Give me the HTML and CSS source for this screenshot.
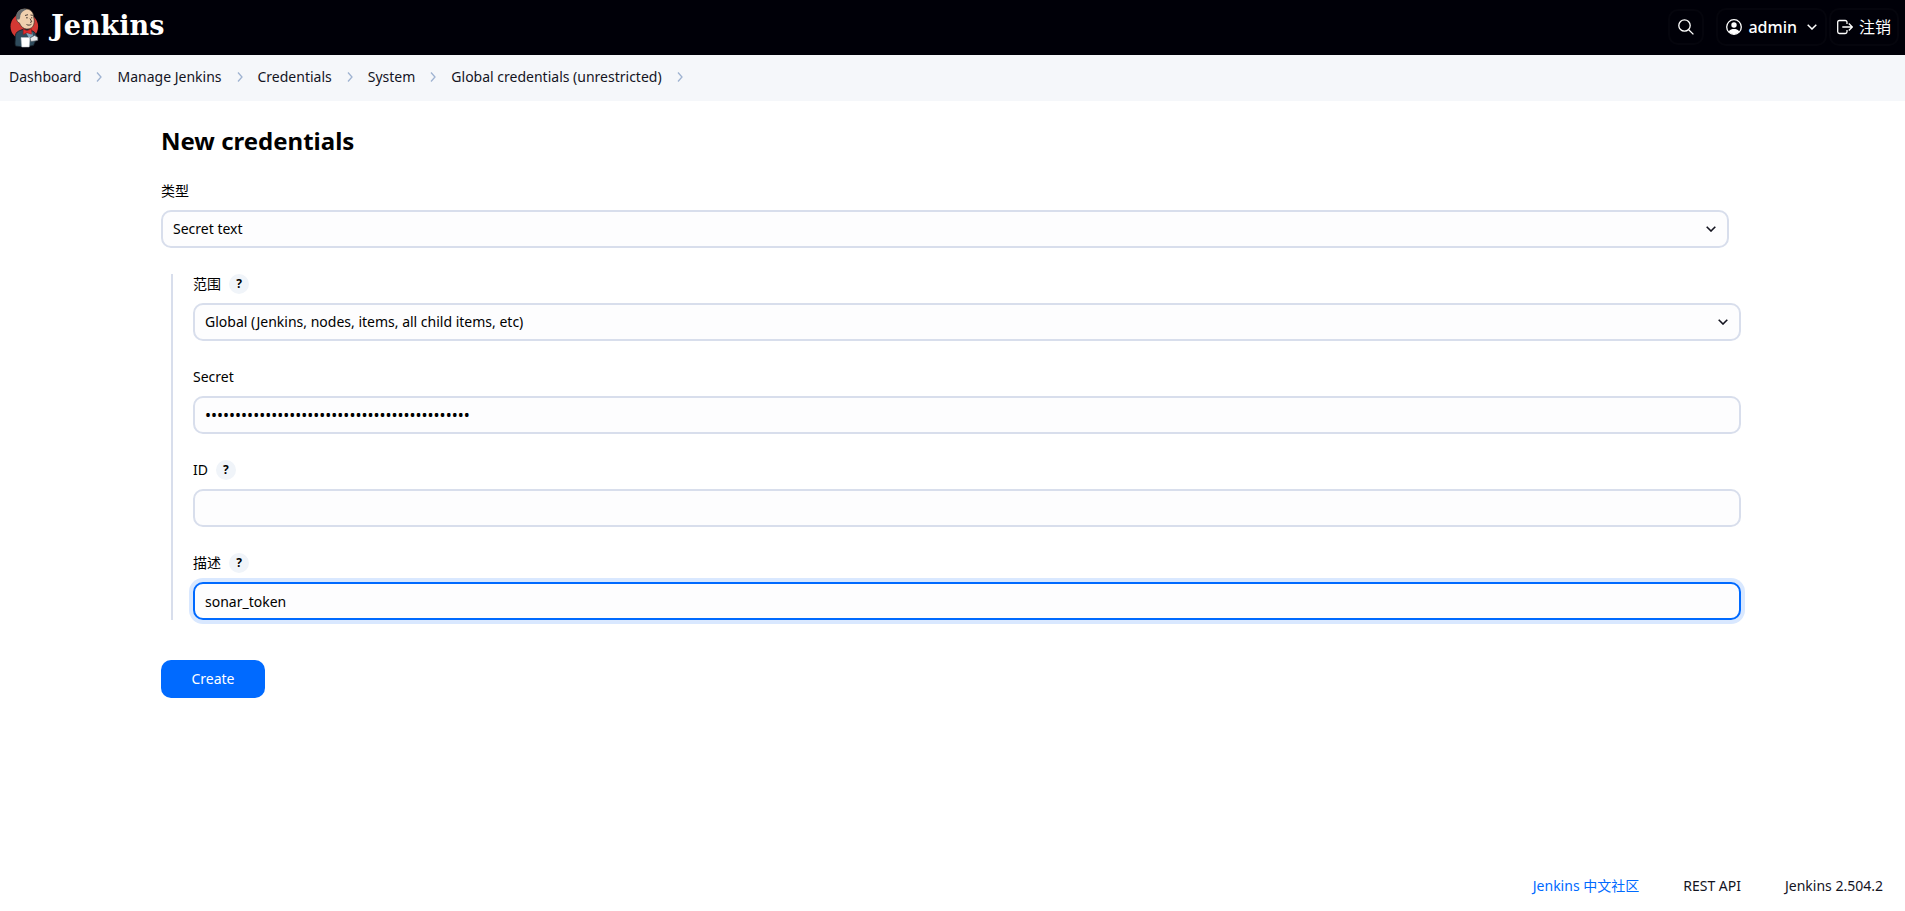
FILE: index.html
```html
<!DOCTYPE html>
<html lang="zh-CN">
<head>
<meta charset="utf-8">
<meta name="viewport" content="width=device-width, initial-scale=1">
<title>New credentials [Jenkins]</title>
<link rel="stylesheet" href="styles.css">
</head>
<body>
<header class="header">
  <a class="brand" href="#">
    <svg class="brand-logo" viewBox="0 0 29 40" aria-hidden="true">
      <ellipse cx="14.300" cy="18.500" rx="13.800" ry="13.500" fill="#d33833"/>
      <path d="M5.500 38C4.500 35 5.500 33 5.300 29c-.2-2.500 1-5 3.500-6l5-2 7 1 3.500 2c2 2 2.700 5 2.200 7l-3 6.500-10 1.500z" fill="#2f4b5c" stroke="#141d26" stroke-width=".8"/>
      <path d="M6.500 10C6 4 10 .8 15 .8c5.500 0 8.500 3.200 8.700 8.200.2 2 .8 3 .5 5.500-.4 3.500-2 5.500-5 6.300-3.500.8-6.500-.5-8.200-3-.8-1.300-1.200-2-1.700-3-1.800-.3-2.800-2.500-2.800-4.800z" fill="#f0d0ae" stroke="#3b302b" stroke-width=".7"/>
      <path d="M6.700 11.500C5.500 7 7 3 11 1.400c2.200-1 4.500-1 6 0C14 2 11 4 10.300 7.500c0 1.800-.3 3-1 4z" fill="#676b6e"/>
      <path d="M15 7.500l3-.8M20.500 7l2.300.4M16 9.800h1.800M21 9.800h1.300M20 10.500l1.800 3.300-1.800.6M16.500 16.500c1.800 1 3.500.8 5-.3" fill="none" stroke="#3b302b" stroke-width=".9"/>
      <path d="M16 25l6-1 1 4-4 2z" fill="#82a6bd"/>
      <path d="M13.200 21l3.800 1.800 4.500-2v5.400L17 24.700l-3.800 1.800z" fill="#e02c2e" stroke="#8b1815" stroke-width=".5"/>
      <path d="M11 29.500h9l-.8 9.500h-7.400z" fill="#fff" stroke="#b8bec4" stroke-width=".5"/>
      <path d="M20 30l4.500-2.500 3.300 1.800v3.200l-6.800 1z" fill="#e7e9eb" stroke="#50565c" stroke-width=".6"/>
    </svg>
    <span class="brand-name">Jenkins</span>
  </a>
  <nav class="header-actions" aria-label="Account">
    <button class="header-button header-search" type="button" aria-label="Search">
      <svg class="icon" viewBox="0 0 16 16"><circle cx="6.500" cy="6.500" r="5.700"/><path d="M10.700 10.700l4.700 4.700"/></svg>
    </button>
    <button class="header-button header-user" type="button">
      <svg class="icon" viewBox="0 0 16 16"><circle cx="8" cy="8" r="7.300"/><circle cx="8" cy="6" r="2.700" fill="currentColor" stroke="none"/><path d="M2.700 12.600C4 10.400 6 10 8 10s4 .4 5.300 2.600A7 7 0 0 1 8 15.200a7 7 0 0 1-5.300-2.600z" fill="currentColor" stroke="none"/></svg>
      <span>admin</span>
      <svg class="header-chevron" viewBox="0 0 10 6"><path d="M.7.7L5 5 9.300.7"/></svg>
    </button>
    <a class="header-button header-logout" href="#">
      <svg class="icon" viewBox="0 0 16 16"><path d="M10 5V3.200C10 2 9.300 1.500 8.200 1.500H2.500C1.200 1.500.7 2.200.7 3.300v9.400c0 1.200.6 1.800 1.800 1.800h5.700c1.200 0 1.800-.6 1.800-1.800V11M5.300 8h10M11.800 4.500L15.300 8l-3.500 3.500"/></svg>
      <span>注销</span>
    </a>
  </nav>
</header>

<nav class="breadcrumbs" aria-label="Breadcrumb">
  <a href="#">Dashboard</a>
  <svg class="separator" viewBox="0 0 6 10"><path d="M1 .5L5 5 1 9.500"/></svg>
  <a href="#">Manage Jenkins</a>
  <svg class="separator" viewBox="0 0 6 10"><path d="M1 .5L5 5 1 9.500"/></svg>
  <a href="#">Credentials</a>
  <svg class="separator" viewBox="0 0 6 10"><path d="M1 .5L5 5 1 9.500"/></svg>
  <a href="#">System</a>
  <svg class="separator" viewBox="0 0 6 10"><path d="M1 .5L5 5 1 9.500"/></svg>
  <a href="#">Global credentials (unrestricted)</a>
  <svg class="separator" viewBox="0 0 6 10"><path d="M1 .5L5 5 1 9.500"/></svg>
</nav>

<main class="main">
  <h1 class="title">New credentials</h1>
  <form class="form">
    <div class="field field-kind">
      <div class="field-head"><label for="kind">类型</label></div>
      <div class="select">
        <select class="control" id="kind"><option>Secret text</option></select>
        <svg class="select-arrow" viewBox="0 0 10 6"><path d="M.7.7L5 5 9.300.7"/></svg>
      </div>
    </div>
    <div class="group">
      <div class="field">
        <div class="field-head"><label for="scope">范围</label><button class="help" type="button" aria-label="Help for scope">?</button></div>
        <div class="select">
          <select class="control" id="scope"><option>Global (Jenkins, nodes, items, all child items, etc)</option></select>
          <svg class="select-arrow" viewBox="0 0 10 6"><path d="M.7.7L5 5 9.300.7"/></svg>
        </div>
      </div>
      <div class="field">
        <div class="field-head"><label for="secret">Secret</label></div>
        <input class="control control-secret" id="secret" type="password" value="00000000000000000000000000000000000000000000">
      </div>
      <div class="field">
        <div class="field-head"><label for="cred-id">ID</label><button class="help" type="button" aria-label="Help for ID">?</button></div>
        <input class="control" id="cred-id" type="text">
      </div>
      <div class="field">
        <div class="field-head"><label for="description">描述</label><button class="help" type="button" aria-label="Help for description">?</button></div>
        <input class="control control-active" id="description" type="text" value="sonar_token">
      </div>
    </div>
    <button class="submit" type="submit">Create</button>
  </form>
</main>

<footer class="footer">
  <a class="footer-community" href="#">Jenkins 中文社区</a>
  <a href="#">REST API</a>
  <button class="footer-version" type="button">Jenkins 2.504.2</button>
</footer>
</body>
</html>
```
FILE: styles.css
```css
*, *::before, *::after { box-sizing: border-box; }

body {
  display: flex;
  flex-direction: column;
  min-height: 100vh;
  margin: 0;
  background: #fff;
  color: #14141f;
  font: 14px/20px "Noto Sans", "Noto Sans CJK SC", sans-serif;
}

button, input, select { font: inherit; color: inherit; }
a { color: inherit; text-decoration: none; }
svg { flex: none; fill: none; stroke: currentColor; }

.header {
  display: flex;
  align-items: center;
  justify-content: space-between;
  height: 55px;
  padding: 0 6px 0 10px;
  background: #000008;
  color: #fff;
}

.brand { display: flex; align-items: center; gap: 12px; }
.brand-logo { width: 29px; height: 40px; stroke: none; }
.brand-name { padding-bottom: 4px; font: bold 27px/32px "DejaVu Serif", serif; }

.header-actions { display: flex; align-items: center; gap: 2px; padding-bottom: 1px; font-size: 16px; }
.header-button {
  display: flex;
  align-items: center;
  height: 38px;
  gap: 6px;
  padding: 0 8px;
  border: 2px solid #05050d;
  border-radius: 10px;
  background: transparent;
}
.header-search { width: 36px; height: 36px; margin-right: 10px; }
.header-user { font-weight: 500; }
.header-logout { padding: 0 6px; }
.header-chevron { width: 10px; height: 6px; margin-left: 4px; stroke-width: 1.5; }
.icon { width: 16px; height: 16px; stroke-width: 1.3; }

.breadcrumbs {
  display: flex;
  align-items: center;
  height: 46px;
  gap: 15px;
  padding: 0 9px 2px;
  background: #f5f7fa;
}
.separator { width: 6px; height: 10px; color: #9fb3d1; stroke-width: 1.3; }

.main {
  flex: 1;
  width: 100%;
  max-width: 1583px;
  margin: 0 auto;
  padding-top: 24px;
}
.title { margin: 0 0 24px; color: #000; font-size: 24px; line-height: 32px; }

.field-head { display: flex; align-items: center; gap: 8px; height: 20px; margin-bottom: 9px; color: #000; }
.field-kind { margin-right: 15px; }
.help {
  width: 20px;
  height: 20px;
  padding: 0;
  border: 0;
  border-radius: 50%;
  background: #f0f4f9;
  font-size: 12px;
  font-weight: 700;
  line-height: 20px;
}

.select { position: relative; }
.select-arrow { position: absolute; right: 13px; top: 16px; width: 10px; height: 6px; stroke-width: 1.6; pointer-events: none; }
.control {
  display: block;
  width: 100%;
  height: 38px;
  padding: 0 10px;
  border: 2px solid #d8deec;
  border-radius: 10px;
  outline: 0;
  background: #fdfdfe;
  color: #000;
  appearance: none;
}
.control-secret { font-size: 16px; }
.control:focus, .control-active { border-color: #006aff; box-shadow: 0 0 0 4px #d9e8ff; }

.group {
  display: grid;
  gap: 26px;
  margin: 26px 3px 40px 10px;
  padding-left: 20px;
  border-left: 2px solid #d8deec;
}

.submit {
  min-width: 104px;
  height: 38px;
  padding: 0 28px;
  border: 0;
  border-radius: 10px;
  background: #006aff;
  color: #fff;
}

.footer { display: flex; justify-content: flex-end; gap: 44px; padding: 15px 22px; }
.footer-community { color: #006aff; }
.footer-version { padding: 0; border: 0; background: none; }
```
